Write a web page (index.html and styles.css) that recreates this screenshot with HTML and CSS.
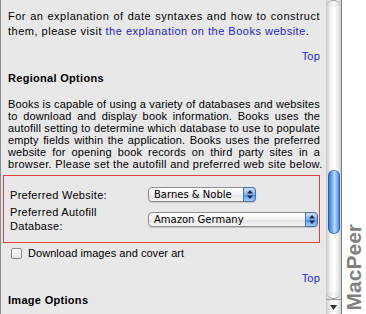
FILE: index.html
```html
<!DOCTYPE html>
<html lang="en">
<head>
    <meta charset="UTF-8">
    <title>Books Preferences Help</title>
    <link rel="stylesheet" href="styles.css">
</head>
<body>
    <div class="frame">
        <div class="panel">
            <p class="intro">For an explanation of date syntaxes and how to construct them, please visit <a href="#">the explanation on the Books website</a>.</p>
            <div class="top"><a href="#">Top</a></div>

            <h3>Regional Options</h3>
            <p class="para">
                <span class="ln">Books is capable of using a variety of databases and websites</span>
                <span class="ln">to download and display book information. Books uses the</span>
                <span class="ln">autofill setting to determine which database to use to populate</span>
                <span class="ln">empty fields within the application. Books uses the preferred</span>
                <span class="ln">website for opening book records on third party sites in a</span>
                <span class="end">browser. Please set the autofill and preferred web site below.</span>
            </p>

            <div class="highlight">
                <div class="row">
                    <span class="label">Preferred Website:</span>
                    <span class="popup short">Barnes &amp; Noble<span class="stepper"><svg width="6" height="9" viewBox="0 0 6 9"><path d="M0 3.5 L3 0 L6 3.5Z M0 5.5 L3 9 L6 5.5Z" fill="#1b2a44"/></svg></span></span>
                </div>
                <div class="row">
                    <span class="label">Preferred Autofill<br>Database:</span>
                    <span class="popup long">Amazon Germany<span class="stepper"><svg width="6" height="9" viewBox="0 0 6 9"><path d="M0 3.5 L3 0 L6 3.5Z M0 5.5 L3 9 L6 5.5Z" fill="#1b2a44"/></svg></span></span>
                </div>
            </div>

            <label class="check"><span class="box"></span>Download images and cover art</label>
            <div class="top bottom-top"><a href="#">Top</a></div>

            <h3 class="last">Image Options</h3>
        </div>

        <div class="scrollbar">
            <div class="cap"></div>
            <div class="thumb"></div>
            <div class="endcap"></div>
            <div class="arrow"><svg width="7" height="5" viewBox="0 0 7 5"><path d="M0 0 L7 0 L3.5 5Z" fill="#333"/></svg></div>
        </div>

        <div class="brand"><span>MacPeer</span></div>
    </div>
</body>
</html>
```

FILE: styles.css
```css
body {
    margin: 0;
    background: #fff;
    font-family: "Liberation Sans", Arial, sans-serif;
    font-size: 11px;
    letter-spacing: 0.3px;
    color: #000;
}

.frame {
    display: flex;
    height: 314px;
    overflow: hidden;
}

.panel {
    width: 326px;
    box-sizing: border-box;
    background: #e8e8e8;
    border-left: 1px solid #8c8c8c;
    padding: 9px 6px 0 7px;
}

a {
    color: #1f1fd4;
    text-decoration: none;
}

.intro {
    margin: 0;
    line-height: 15px;
    letter-spacing: 0.5px;
    text-align: justify;
}

.top {
    text-align: right;
    margin-top: 10px;
    line-height: 14px;
    letter-spacing: 0.2px;
}

h3 {
    font-size: 11px;
    margin: 8px 0 0;
    line-height: 14px;
}

.para {
    margin: 13px 0 0;
    line-height: 12px;
    letter-spacing: 0.15px;
}

.para span {
    display: block;
    white-space: nowrap;
}

.para .ln {
    text-align: justify;
    text-align-last: justify;
}

.para .end {
    letter-spacing: 0.3px;
}

.highlight {
    margin: 5px 0 0 -5px;
    border: 1.5px solid #e2403a;
    padding: 11px 0 4px 6px;
    height: 68px;
    box-sizing: border-box;
}

.row {
    display: flex;
    align-items: center;
    margin-bottom: 3px;
}

.label {
    width: 138px;
    line-height: 14px;
    flex: none;
}

.popup {
    position: relative;
    display: flex;
    align-items: center;
    height: 15px;
    box-sizing: border-box;
    border: 1px solid #8e8e8e;
    border-radius: 4px;
    background: linear-gradient(#ffffff, #f2f2f2 50%, #e2e2e2 51%, #f6f6f6);
    font-family: "DejaVu Sans", sans-serif;
    font-size: 10px;
    letter-spacing: 0;
    padding-left: 5px;
    box-shadow: 0 1px 1px rgba(0, 0, 0, 0.15);
}

.popup.short {
    width: 108px;
}

.popup.long {
    width: 170px;
}

.stepper {
    position: absolute;
    right: -1px;
    top: -1px;
    bottom: -1px;
    width: 13px;
    border-radius: 0 4px 4px 0;
    border: 1px solid #4a6fb0;
    box-sizing: border-box;
    background: linear-gradient(#cfe3fb, #7fb0f0 50%, #4f8ee6 51%, #9fd0fb);
    display: flex;
    align-items: center;
    justify-content: center;
}

.check {
    display: flex;
    align-items: center;
    margin-top: 4px;
    line-height: 12px;
    padding-left: 3px;
    letter-spacing: 0.05px;
}

.box {
    width: 9px;
    height: 9px;
    border: 1px solid #8a8a8a;
    border-radius: 2px;
    background: linear-gradient(#fff, #e4e4e4);
    margin-right: 6px;
}

.bottom-top {
    margin-top: 12px;
}

h3.last {
    margin-top: 8px;
}

/* aqua scrollbar */
.scrollbar {
    width: 15px;
    border-right: 1px solid #7c7c7c;
    background: linear-gradient(to right, #c9c9c9, #f4f4f4 30%, #ffffff 55%, #e6e6e6 85%, #cfcfcf);
    display: flex;
    flex-direction: column;
    align-items: center;
}

.cap {
    width: 13px;
    height: 6px;
    border-radius: 6px 6px 0 0;
    border-top: 1px solid #9a9a9a;
    background: linear-gradient(to right, #d8d8d8, #fafafa, #dcdcdc);
}

.thumb {
    margin-top: 163px;
    width: 12px;
    height: 64px;
    border-radius: 6px;
    background: linear-gradient(to right, #3267c8, #79aff3 35%, #b8dcfd 55%, #6ea8ef 80%, #3a72d0);
    box-shadow: inset 0 0 0 1px rgba(30, 70, 150, 0.5);
}

.endcap {
    margin-top: auto;
    width: 13px;
    height: 6px;
    border-radius: 0 0 6px 6px;
    border-bottom: 1px solid #a0a0a0;
    background: linear-gradient(to right, #d8d8d8, #fafafa, #dcdcdc);
}

.arrow {
    width: 15px;
    height: 14px;
    border-top: 1px solid #a0a0a0;
    display: flex;
    align-items: center;
    justify-content: center;
}

.brand {
    flex: 1;
    display: flex;
    flex-direction: column;
    justify-content: flex-end;
    align-items: center;
    padding-bottom: 4px;
}

.brand span {
    writing-mode: vertical-rl;
    transform: rotate(180deg);
    font-family: "Liberation Sans", Arial, sans-serif;
    font-weight: bold;
    font-size: 21px;
    letter-spacing: 0;
    color: #808080;
}
```
